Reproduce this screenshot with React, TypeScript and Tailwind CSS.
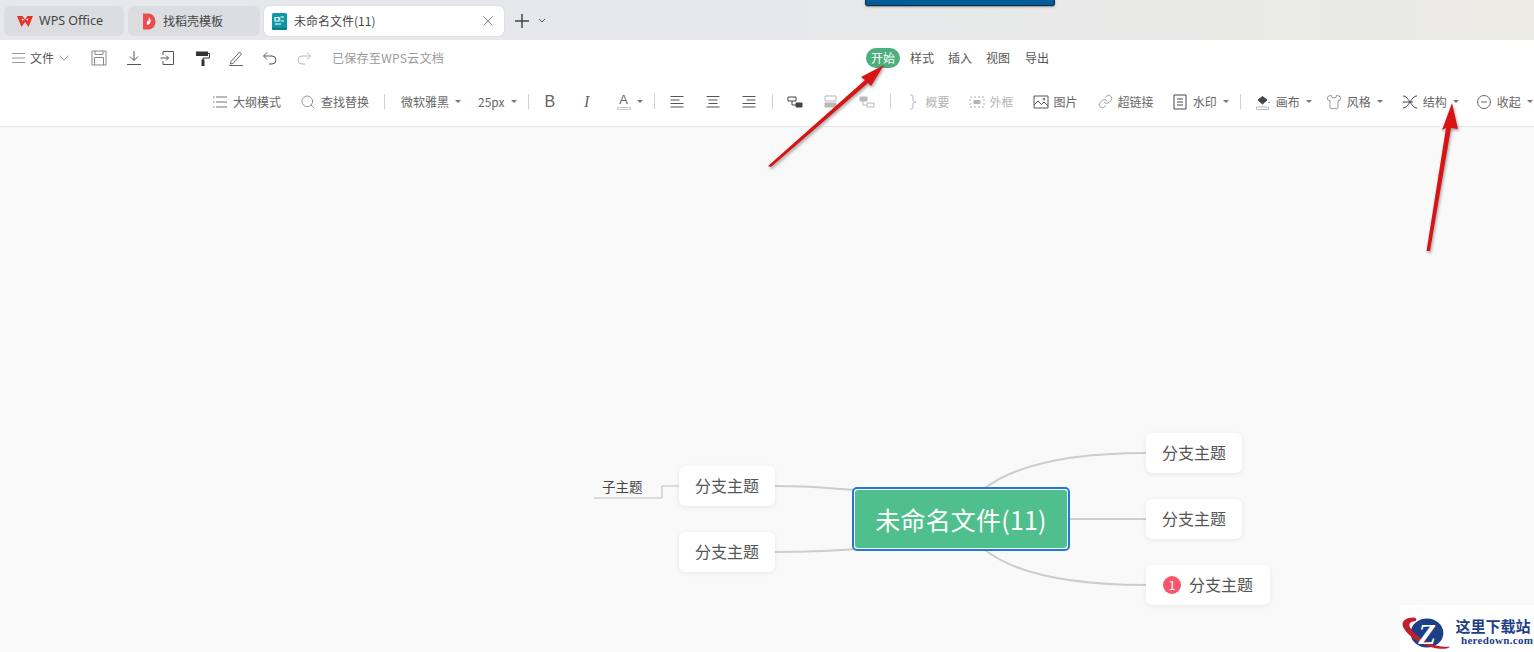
import { Link, Search, Shirt } from 'lucide-react';
import type { ReactNode } from 'react';

function Caret() {
  return <span className="ml-[6px] h-0 w-0 border-x-[3px] border-t-[3px] border-x-transparent border-t-[#777]" />;
}

function Sep({ className }: { className: string }) {
  return <span className={`h-[15px] w-px shrink-0 bg-[#d0d0d0] ${className}`} />;
}

function Ico({ children, className = '' }: { children: ReactNode; className?: string }) {
  return (
    <svg viewBox="0 0 16 16" fill="none" stroke="currentColor" strokeWidth="1" className={`h-4 w-4 shrink-0 ${className}`}>
      {children}
    </svg>
  );
}

function Tool({ icon, label, caret, className = '', muted }: { icon?: ReactNode; label: string; caret?: boolean; className?: string; muted?: boolean }) {
  return (
    <div className={`flex shrink-0 items-center ${muted ? 'text-[#b4b4b4]' : 'text-[#666]'} ${className}`}>
      {icon}
      <span className="ml-[5px] whitespace-nowrap">{label}</span>
      {caret && <Caret />}
    </div>
  );
}

function AlignIcon({ mode }: { mode: 'left' | 'center' | 'right' }) {
  const rows = mode === 'left'
    ? ['M1.5 2.5h13', 'M1.5 6h9', 'M1.5 9.5h13', 'M1.5 13h13']
    : mode === 'center'
      ? ['M1.5 2.5h13', 'M3.5 6h9', 'M3.5 9.5h9', 'M1.5 13h13']
      : ['M1.5 2.5h13', 'M5.5 6h9', 'M1.5 9.5h13', 'M1.5 13h13'];
  return <Ico className="text-[#555]">{rows.map(d => <path key={d} d={d} />)}</Ico>;
}

function Branch({ className, badge }: { className: string; badge?: boolean }) {
  return (
    <div className={`absolute flex h-10 items-center justify-center rounded-md bg-white pb-[2px] text-[16px] text-[#555] shadow-[0_1px_4px_rgba(0,0,0,0.08)] ${className}`}>
      {badge && (
        <span className="mr-[8px] mt-[2px] flex h-[18px] w-[18px] items-center justify-center rounded-full bg-[#f5566c] text-[12px] leading-none text-white">1</span>
      )}
      分支主题
    </div>
  );
}

export default function App() {
  return (
    <div className="relative flex h-screen w-full flex-col overflow-hidden bg-white font-['Noto_Sans_CJK_SC',sans-serif] text-[12px] text-[#555]">
      {/* tabs */}
      <div className="relative flex h-10 shrink-0 items-start bg-gradient-to-r from-[#e6e8eb] via-[#e6e8eb] to-[#ebeae3] pl-[4px] pt-[6px]">
        <div className="flex h-[30px] w-[120px] items-center rounded-md bg-[#dbdde0] pl-[13px]">
          <svg viewBox="0 0 16 11" className="h-[11px] w-[16px]">
            <path d="M0 0h5.500L8 3.500 10.500 0H16l-4.500 11L8 6l-3.500 5z" fill="#e5352b" />
            <path d="M4.500 2.500L5.500 5 7 3.200zM11.500 2.500L10.500 5 9 3.200z" fill="#fff" />
          </svg>
          <span className="ml-[6px] font-['Noto_Sans'] text-[12.500px] text-[#444]">WPS Office</span>
        </div>
        <div className="ml-[4px] flex h-[30px] w-[132px] items-center rounded-md bg-[#dbdde0] pl-[14px]">
          <svg viewBox="0 0 14 17" className="h-[17px] w-[14px]">
            <path d="M1 0.500h5.500a7 8 0 0 1 0 16H1z" fill="#ea4d4d" />
            <path d="M7 4c0.500 2 2.500 2.500 1.500 5-0.500 1.500-2 2.500-3 3-1-1.500-1-3 0-4 0.500 0.500 1 0.500 1-0.500z" fill="#fff" />
          </svg>
          <span className="ml-[7px] text-[12px] text-[#444]">找稻壳模板</span>
        </div>
        <div className="ml-[4px] flex h-[30px] w-[240px] items-center rounded-md bg-white pl-[8px] pr-[11px] shadow-[0_0_2px_rgba(0,0,0,0.12)]">
          <svg viewBox="0 0 15 17" className="h-[17px] w-[15px]">
            <rect width="15" height="17" rx="1.500" fill="#0f98a6" />
            <path d="M0 14.500h15V15.500a1.500 1.500 0 0 1-1.500 1.500h-12A1.500 1.500 0 0 1 0 15.500z" fill="#0b7d89" />
            <path d="M3 4.500h4v3.500H3zM8.500 4h3.500M8.500 8h3.500M3 11h6M7 6h1.500" stroke="#fff" strokeWidth="1.200" fill="none" />
          </svg>
          <span className="ml-[7px] text-[12px] text-[#444]">未命名文件(11)</span>
          <svg viewBox="0 0 10 10" className="ml-auto h-[10px] w-[10px] text-[#888]" stroke="currentColor" strokeWidth="1">
            <path d="M0.500 0.500l9 9M9.500 0.500l-9 9" />
          </svg>
        </div>
        <svg viewBox="0 0 14 14" className="ml-[11px] mt-[8px] h-[14px] w-[14px] text-[#444]" stroke="currentColor" strokeWidth="1.500">
          <path d="M7 0v14M0 7h14" />
        </svg>
        <svg viewBox="0 0 8 5" className="ml-[9px] mt-[12px] h-[5px] w-[8px] text-[#555]" fill="none" stroke="currentColor" strokeWidth="1">
          <path d="M1 1l3 3 3-3" />
        </svg>
        <div className="absolute left-[865px] top-0 h-[6px] w-[190px] rounded-b-[3px] border-x border-b border-[#10283c] bg-[#005b98] shadow-[0_1px_2px_rgba(0,0,0,0.4)]" />
      </div>

      {/* menu row */}
      <div className="flex h-[36px] shrink-0 items-center pl-[12px]">
        <div className="flex w-[854px] shrink-0 items-center">
          <svg viewBox="0 0 13 12" className="h-[12px] w-[13px] text-[#999]" stroke="currentColor" strokeWidth="1">
            <path d="M0 1.500h13M0 6h13M0 10.500h13" />
          </svg>
          <span className="ml-[5px] text-[#555]">文件</span>
          <svg viewBox="0 0 10 6" className="ml-[5px] h-[6px] w-[10px] text-[#aaa]" fill="none" stroke="currentColor" strokeWidth="1">
            <path d="M0.500 0.500L5 5l4.500-4.500" />
          </svg>
          <Ico className="ml-[22px] text-[#888]">
            <path d="M1 1h14v14H1zM4 1v3.500h8V1M3.500 15V7.500h9V15" />
          </Ico>
          <Ico className="ml-[19px] text-[#555]">
            <path d="M8 1v9.500M4 6.500l4 4 4-4M1 14.500h14" />
          </Ico>
          <Ico className="ml-[18px] text-[#555]">
            <path d="M3 5V1.500h10.500v13H3V11M0.500 8h8M6 5.500L8.500 8 6 10.500" />
          </Ico>
          <svg viewBox="0 0 14 16" className="ml-[20px] h-4 w-[14px] text-[#333]">
            <path d="M0 1.500h12v4.500H0z" fill="currentColor" />
            <path d="M12 3.500h1.500v4.500H7v2" fill="none" stroke="currentColor" />
            <path d="M5.500 9.500h3v6.500h-3z" fill="currentColor" />
          </svg>
          <Ico className="ml-[18px] text-[#666]">
            <path d="M3 11.500L11.500 2l2 2L5 13.500l-2.500 0.500zM1 15.500h14" />
          </Ico>
          <Ico className="ml-[18px] text-[#555]">
            <path d="M2 6h8a4 4 0 0 1 0 8H7M5 2.500L1.500 6 5 9.500" />
          </Ico>
          <Ico className="ml-[18px] text-[#bbb]">
            <path d="M14 6H6a4 4 0 0 0 0 8h3M11 2.500L14.500 6 11 9.500" />
          </Ico>
          <span className="ml-[20px] whitespace-nowrap tracking-[0.3px] text-[#999]">已保存至WPS云文档</span>
        </div>
        <div className="flex items-center">
          <span className="flex h-5 w-[34px] items-center justify-center rounded-full bg-[#4caf7d] text-white">开始</span>
          <span className="ml-[10px]">样式</span>
          <span className="ml-[14px]">插入</span>
          <span className="ml-[14px]">视图</span>
          <span className="ml-[15px]">导出</span>
        </div>
      </div>

      {/* toolbar */}
      <div className="flex h-[51px] shrink-0 items-center border-b border-[#e6e6e6] pl-[212px] pt-px shadow-[0_1px_2px_rgba(0,0,0,0.03)]">
        <Tool
          label="大纲模式"
          icon={<Ico className="text-[#777]"><path d="M4 3h11M4 8h11M4 13h11M1 3h1.500M1 8h1.500M1 13h1.500" /></Ico>}
        />
        <Tool className="ml-[19px]" label="查找替换" icon={<Search size={16} strokeWidth={1} className="shrink-0" />} />
        <Sep className="ml-[15px]" />
        <Tool className="ml-[11px]" label="微软雅黑" caret />
        <Tool className="ml-[12px]" label="25px" caret />
        <Sep className="ml-[11px]" />
        <span className="ml-[16px] w-[10px] text-center font-['Liberation_Sans'] text-[16px] text-[#666]">B</span>
        <span className="ml-[27px] w-[10px] text-center font-['Liberation_Serif'] text-[16px] italic text-[#666]">I</span>
        <div className="ml-[25px] flex w-[14px] flex-col items-center leading-none">
          <span className="font-['Liberation_Sans'] text-[13px] text-[#666]">A</span>
          <span className="mt-[1px] h-[3px] w-[14px] border border-[#ccc]" />
        </div>
        <Caret />
        <Sep className="ml-[11px]" />
        <div className="ml-[14px]"><AlignIcon mode="left" /></div>
        <div className="ml-[20px]"><AlignIcon mode="center" /></div>
        <div className="ml-[20px]"><AlignIcon mode="right" /></div>
        <Sep className="ml-[15px]" />
        <Ico className="ml-[14px] text-[#444]">
          <path d="M1 3h8v4H1zM5 7v4h4" />
          <path d="M9 9h6v4H9z" fill="currentColor" />
        </Ico>
        <Ico className="ml-[20px] text-[#b8b8b8]">
          <path d="M2 2h11v5H2z" />
          <path d="M2 9h11v4H2z" fill="currentColor" />
        </Ico>
        <Ico className="ml-[20px] text-[#b8b8b8]">
          <path d="M1 3h7v4H1z" fill="currentColor" />
          <path d="M4 7v4h4M8 9h7v4H8z" />
        </Ico>
        <Sep className="ml-[15px]" />
        <Tool
          muted
          className="ml-[14px]"
          label="概要"
          icon={<Ico><path d="M5 1c3 0 3 1 3 3v2c0 1 1 2 3 2-2 0-3 1-3 2v2c0 2 0 3-3 3" /></Ico>}
        />
        <Tool
          muted
          className="ml-[19px]"
          label="外框"
          icon={<Ico><path d="M1 3h14v10H1z" strokeDasharray="2 2" /><path d="M5 6.500h6v3H5z" fill="currentColor" /></Ico>}
        />
        <Tool
          className="ml-[19px]"
          label="图片"
          icon={<Ico className="text-[#555]"><path d="M1 2h14v12H1zM1 11l4-4 3.500 3.500L11 8l4 4" /><circle cx="11" cy="5" r="0.800" /></Ico>}
        />
        <Tool className="ml-[20px]" label="超链接" icon={<Link size={15} strokeWidth={1} className="shrink-0" />} />
        <Tool
          className="ml-[18px]"
          label="水印"
          caret
          icon={<Ico className="text-[#444]"><path d="M2 1h12v14H2zM5 5h6M5 8h6M5 11h6" /></Ico>}
        />
        <Sep className="ml-[11px]" />
        <Tool
          className="ml-[14px]"
          label="画布"
          caret
          icon={
            <Ico className="text-[#444]">
              <path d="M3 6l4.500-3.500L12 6l-4.500 4z" fill="currentColor" />
              <path d="M14 8v1" />
              <path d="M1.500 13h12v2.500h-12z" className="text-[#bbb]" strokeWidth="1" />
            </Ico>
          }
        />
        <Tool className="ml-[14px]" label="风格" caret icon={<Shirt size={16} strokeWidth={1} className="shrink-0" />} />
        <Tool
          className="ml-[19px]"
          label="结构"
          caret
          icon={<Ico className="text-[#444]"><path d="M1 2c3 0 5 3 7 6 2 3 4 6 7 6M1 14c3 0 5-3 7-6 2-3 4-6 7-6M1 8h10" /></Ico>}
        />
        <Tool
          className="ml-[17px]"
          label="收起"
          caret
          icon={<Ico><circle cx="8" cy="8" r="6.500" /><path d="M5 8h6" /></Ico>}
        />
      </div>

      {/* mind map canvas */}
      <div className="relative flex-1 bg-[#f9f9f9]">
        <svg viewBox="0 127 1534 525" className="absolute inset-0 h-full w-full" fill="none" stroke="#cdcdcd" strokeWidth="2">
          <path d="M985 488C1020 462 1080 453 1146 453" />
          <path d="M1069 519H1146" />
          <path d="M985 550C1020 577 1080 585 1146 585" />
          <path d="M775 486C810 486 830 488 854 490" />
          <path d="M775 552C810 552 835 551 870 548" />
          <path d="M594 498H662V486H679" stroke="#bdbdbd" strokeWidth="1" />
        </svg>
        <span className="absolute left-[602px] top-[349px] text-[13.500px] leading-[20px] text-[#444]">子主题</span>
        <Branch className="left-[679px] top-[339px] w-[96px]" />
        <Branch className="left-[679px] top-[405px] w-[96px]" />
        <Branch className="left-[1146px] top-[306px] w-[96px]" />
        <Branch className="left-[1146px] top-[372px] w-[96px]" />
        <Branch badge className="left-[1146px] top-[438px] w-[124px]" />
        <div className="absolute left-[852px] top-[360px] flex h-[64px] w-[218px] rounded-[5px] border-2 border-[#1f7ad6] bg-white p-px">
          <div className="flex flex-1 items-center justify-center rounded-[3px] bg-[#4fc08d] pt-[2px] text-[25px] tracking-[0.2px] text-white">未命名文件(11)</div>
        </div>

        {/* site watermark */}
        <div className="absolute bottom-0 right-0 flex h-[47px] w-[134px] items-center bg-white">
          <svg viewBox="0 0 54 38" className="mt-[8px] h-[38px] w-[52px] shrink-0">
            <ellipse cx="28" cy="19" rx="17" ry="15" fill="#1c3f85" />
            <path d="M14 3C7 3 1 6 3 12c3 9 20 21 36 23 6 1 12 0 13-2-12 2-28-4-39-16C9 12 8 8 14 7c2 0 3-1 3-2s-1-2-3-2z" fill="#c0202a" />
            <text x="28" y="30" textAnchor="middle" fontFamily="Liberation Serif" fontWeight="700" fontStyle="italic" fontSize="30" fill="#fff">Z</text>
          </svg>
          <div className="ml-[1px] mt-[6px] flex flex-col items-center leading-none">
            <span className="whitespace-nowrap text-[15px] font-bold leading-[17px] text-[#1c3f85]">这里下载站</span>
            <span className="ml-[8px] whitespace-nowrap font-['Liberation_Serif'] text-[11px] font-bold leading-[12px] tracking-[0.3px] text-[#1c3f85]">heredown.com</span>
          </div>
        </div>
      </div>

      {/* red annotation arrows */}
      <svg viewBox="0 0 1534 652" className="pointer-events-none absolute inset-0 h-full w-full">
        <g fill="#d81414" style={{ filter: 'drop-shadow(1px 2px 1.500px rgba(0,0,0,0.35))' }}>
          <path d="M768 166L865 80l-4-3 23-12-13 21-3-3-97 84z" />
          <path d="M1426.500 251L1446 128l-4 2 10-27 6 26-7-1-21 123z" />
        </g>
      </svg>
    </div>
  );
}
